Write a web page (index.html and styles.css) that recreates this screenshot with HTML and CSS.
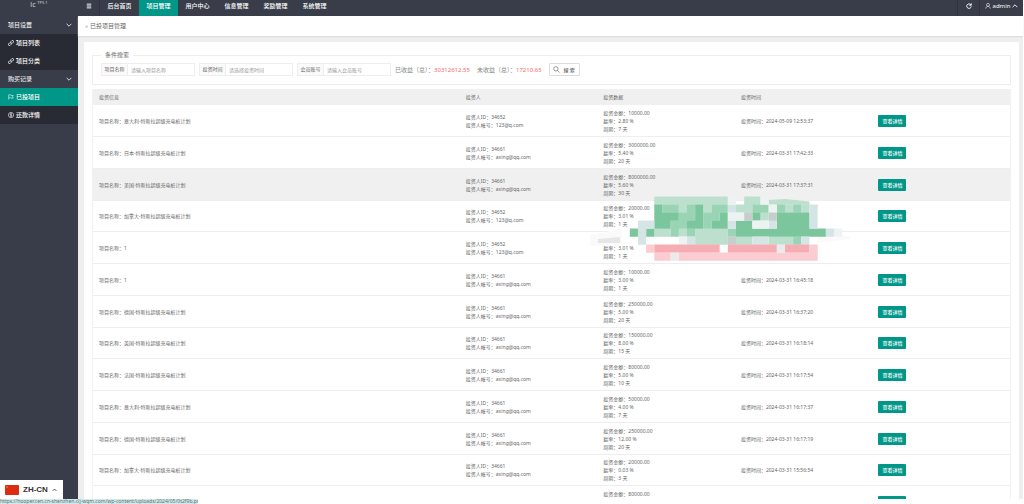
FILE: index.html
```
<!DOCTYPE html>
<html lang="zh-CN">
<head>
<meta charset="utf-8">
<title>已投项目管理</title>
<link rel="stylesheet" href="styles.css">
</head>
<body>
<div class="app">
  <aside class="side">
    <div class="logo">lc <sup>TP5.1</sup></div>
    <nav class="menu">
      <button class="group" type="button">项目设置<svg class="caret" viewBox="0 0 10 6"><path d="M1 1l4 4 4-4"/></svg></button>
      <a class="item" href="#"><svg class="ico" viewBox="0 0 16 16"><path d="M7 9a3 3 0 0 0 4 0l3-3a2.800 2.800 0 0 0-4-4L8 4M9 7a3 3 0 0 0-4 0l-3 3a2.800 2.800 0 0 0 4 4l2-2"/></svg>项目列表</a>
      <a class="item" href="#"><svg class="ico" viewBox="0 0 16 16"><path d="M7 9a3 3 0 0 0 4 0l3-3a2.800 2.800 0 0 0-4-4L8 4M9 7a3 3 0 0 0-4 0l-3 3a2.800 2.800 0 0 0 4 4l2-2"/></svg>项目分类</a>
      <button class="group" type="button">购买记录<svg class="caret" viewBox="0 0 10 6"><path d="M1 1l4 4 4-4"/></svg></button>
      <a class="item active" href="#"><svg class="ico thin" viewBox="0 0 16 16"><path d="M2 15V2h5l1 2h6l-2 3.500 2 3.500H8l-1-1H2"/></svg>已投项目</a>
      <a class="item" href="#"><svg class="ico thin" viewBox="0 0 16 16"><circle cx="8" cy="8" r="7"/><path d="M10.500 5.500C9 4 5.500 4.500 5.500 6.300S10.500 8 10.500 10 7 12 5.300 10.500M8 3v10"/></svg>还款详情</a>
    </nav>
  </aside>
  <div class="body">
    <header class="top">
      <button class="tool burger" type="button" aria-label="菜单"><svg class="ico" viewBox="0 0 16 16"><path d="M2 3h12M2 8h12M2 13h12"/></svg></button>
      <nav class="tabs">
        <a href="#">后台首页</a>
        <a href="#" class="active">项目管理</a>
        <a href="#">用户中心</a>
        <a href="#">信息管理</a>
        <a href="#">奖励管理</a>
        <a href="#">系统管理</a>
      </nav>
      <button class="tool refresh" type="button" aria-label="刷新"><svg class="ico" viewBox="0 0 16 16"><path d="M13 5a6 6 0 1 0 1 4M14 1v5H9"/></svg></button>
      <button class="tool user" type="button"><svg class="ico thin" viewBox="0 0 16 16"><circle cx="8" cy="5" r="4"/><path d="M2 15c0-4 3-6 6-6s5 2 6 6"/></svg>admin<svg class="caret" viewBox="0 0 10 6"><path d="M1 5l4-4 4 4"/></svg></button>
    </header>
    <div class="crumb"><span class="mark">»</span>已投项目管理</div>
    <main class="page">
      <section class="panel">
        <form>
          <fieldset class="search">
            <legend>条件搜索</legend>
            <div class="fields">
              <div class="field"><label for="name">项目名称</label><input id="name" type="text" placeholder="请输入项目名称"></div>
              <div class="field"><label for="time">投资时间</label><input id="time" type="text" placeholder="请选择投资时间"></div>
              <div class="field"><label for="member">会员账号</label><input id="member" type="text" placeholder="请输入会员账号"></div>
              <p class="sum">已收益（总）：<b>30312612.55</b></p>
              <p class="sum">未收益（总）：<b>17210.65</b></p>
              <button class="find" type="submit"><svg class="ico thin" viewBox="0 0 16 16"><circle cx="6.500" cy="6.500" r="5"/><path d="M10 10l5 5"/></svg>搜 索</button>
            </div>
          </fieldset>
        </form>
        <div class="grid">
          <table>
            <thead><tr><th class="wide">投资信息</th><th>投资人</th><th>投资数据</th><th>投资时间</th><th></th></tr></thead>
            <tbody>
              <tr><td>项目名称：意大利-特斯拉超级充电桩计划</td><td>投资人ID：34652<br>投资人帐号：123@q.com</td><td>投资金额：10000.00<br>赢率：2.80 %<br>周期：7 天</td><td>投资时间：2024-05-09 12:53:37</td><td><button class="detail" type="button">查看详情</button></td></tr>
              <tr><td>项目名称：日本-特斯拉超级充电桩计划</td><td>投资人ID：34661<br>投资人帐号：axing@qq.com</td><td>投资金额：3000000.00<br>赢率：5.40 %<br>周期：20 天</td><td>投资时间：2024-03-31 17:42:33</td><td><button class="detail" type="button">查看详情</button></td></tr>
              <tr class="hover"><td>项目名称：美国-特斯拉超级充电桩计划</td><td>投资人ID：34661<br>投资人帐号：axing@qq.com</td><td>投资金额：8000000.00<br>赢率：5.60 %<br>周期：30 天</td><td>投资时间：2024-03-31 17:37:31</td><td><button class="detail" type="button">查看详情</button></td></tr>
              <tr><td>项目名称：加拿大-特斯拉超级充电桩计划</td><td>投资人ID：34652<br>投资人帐号：123@q.com</td><td>投资金额：20000.00<br>赢率：3.01 %<br>周期：1 天</td><td></td><td><button class="detail" type="button">查看详情</button></td></tr>
              <tr><td>项目名称：1</td><td>投资人ID：34652<br>投资人帐号：123@q.com</td><td><br>赢率：3.01 %<br>周期：1 天</td><td></td><td><button class="detail" type="button">查看详情</button></td></tr>
              <tr><td>项目名称：1</td><td>投资人ID：34661<br>投资人帐号：axing@qq.com</td><td>投资金额：10000.00<br>赢率：3.00 %<br>周期：1 天</td><td>投资时间：2024-03-31 16:45:18</td><td><button class="detail" type="button">查看详情</button></td></tr>
              <tr><td>项目名称：德国-特斯拉超级充电桩计划</td><td>投资人ID：34661<br>投资人帐号：axing@qq.com</td><td>投资金额：250000.00<br>赢率：5.00 %<br>周期：20 天</td><td>投资时间：2024-03-31 16:37:20</td><td><button class="detail" type="button">查看详情</button></td></tr>
              <tr><td>项目名称：英国-特斯拉超级充电桩计划</td><td>投资人ID：34661<br>投资人帐号：axing@qq.com</td><td>投资金额：150000.00<br>赢率：8.00 %<br>周期：15 天</td><td>投资时间：2024-03-31 16:18:14</td><td><button class="detail" type="button">查看详情</button></td></tr>
              <tr><td>项目名称：法国-特斯拉超级充电桩计划</td><td>投资人ID：34661<br>投资人帐号：axing@qq.com</td><td>投资金额：80000.00<br>赢率：5.00 %<br>周期：10 天</td><td>投资时间：2024-03-31 16:17:54</td><td><button class="detail" type="button">查看详情</button></td></tr>
              <tr><td>项目名称：意大利-特斯拉超级充电桩计划</td><td>投资人ID：34661<br>投资人帐号：axing@qq.com</td><td>投资金额：50000.00<br>赢率：4.00 %<br>周期：7 天</td><td>投资时间：2024-03-31 16:17:37</td><td><button class="detail" type="button">查看详情</button></td></tr>
              <tr><td>项目名称：德国-特斯拉超级充电桩计划</td><td>投资人ID：34661<br>投资人帐号：axing@qq.com</td><td>投资金额：250000.00<br>赢率：12.00 %<br>周期：20 天</td><td>投资时间：2024-03-31 16:17:19</td><td><button class="detail" type="button">查看详情</button></td></tr>
              <tr><td>项目名称：加拿大-特斯拉超级充电桩计划</td><td>投资人ID：34661<br>投资人帐号：axing@qq.com</td><td>投资金额：20000.00<br>赢率：0.03 %<br>周期：3 天</td><td>投资时间：2024-03-31 15:56:54</td><td><button class="detail" type="button">查看详情</button></td></tr>
              <tr><td></td><td></td><td>投资金额：80000.00<br><br><br></td><td></td><td><button class="detail" type="button" aria-label="查看详情"></button></td></tr>
            </tbody>
          </table>
          <svg class="mosaic" viewBox="0 0 260 68" aria-hidden="true">
            <path fill="#fafafa" d="M0 42L30 36h30v14l-60 3zM225 40l35 3v3l-35 4z"/>
            <path fill="#e6e6e6" d="M8 46l22-2v6H8z"/>
            <path fill="#fff" d="M32 36h24v16H32zM64 9h163v57H64z"/>
            <g transform="translate(64.300 3.700) scale(8.170 8)" fill="none" stroke-width="1.020">
              <path stroke="#bce0cd" d="M0 .5h9M11 .5h2M3 1.500h1M6 1.500h1M10 1.500h2M16 1.500h1M18 1.500h1M13 2.500h1M0 4.500h2M3 4.500h1M5 4.500h4M5 5.500h4M10 5.500h2M14 5.500h3"/>
              <path fill="#bce0cd" stroke="none" d="M14 .4l2-.1 3 .3V1h-5z"/>
              <path stroke="#99d4b4" d="M1 1.500h2M4 1.500h1M7 1.500h2M12 1.500h2M15 1.500h1M17 1.500h1M3 2.500h2M6 2.500h2M2 3.500h2M6 3.500h1M2 4.500h1M4 4.500h1M9 4.500h1M17 5.500h1"/>
              <path stroke="#7bc69c" d="M0 1.500h1M5 1.500h1M0 2.500h3M5 2.500h1M8 2.500h1M12 2.500h1M15 2.500h4M0 3.500h2M4 3.500h2M7 3.500h2M10 3.500h2M15 3.500h4M-3 4.500h1M-1 4.500h1M10 4.500h11"/>
              <path stroke="#d5e5e6" d="M9 1.500h1M19 1.500h1M19 2.500h1M-2 3.500h2M9 3.500h1M14 3.500h1M19 3.500h1M-2 4.500h1M21 4.500h1M4 5.500h1M12 5.500h2M18 5.500h1M-2 5.500h1"/>
              <path stroke="#edf2f3" d="M9 .5h1M13 .5h1M14 1.500h1M9 2.500h2M12 3.500h2M22 4.500h1M3 5.500h1"/>
              <path stroke="#c6cecb" d="M11 2.500h1M14 2.500h1M9 5.500h1"/>
              <path stroke="#f5acb2" d="M0 6.500h8M9 6.500h6M16 6.500h3"/>
              <path stroke="#fbccd1" d="M-1 6.500h1M19 6.500h1M0 7.500h2M3 7.500h17"/>
              <path stroke="#ebe9ea" d="M2 7.500h1M15 6.500h1"/>
            </g>
          </svg>
        </div>
      </section>
    </main>
  </div>
  <button class="lang" type="button"><svg class="flag" viewBox="0 0 14 10"><path fill="#de2c12" d="M0 0h14v10H0z"/><path fill="#f5a623" d="M2 1l.3.700h.7l-.5.500.2.800-.7-.4-.7.4.2-.8-.5-.5h.7z"/></svg>ZH-CN<svg class="caret" viewBox="0 0 10 6"><path d="M1 5l4-4 4 4"/></svg></button>
</div>
<footer class="status"><span>https://hooper.cen.cn-shenzhen.clj-wqm.com/wp-content/uploads/2024/05/0t2f9b.png</span></footer>
</body>
</html>
```
FILE: styles.css
```
* { box-sizing: border-box; }
body {
  margin: 0;
  height: 100vh;
  display: flex;
  flex-direction: column;
  overflow: hidden;
  background: #fff;
  color: #666;
  font: 5px/8px "Noto Sans", "Noto Sans CJK SC", sans-serif;
}
button, input { font: inherit; color: inherit; margin: 0; }
button { border: 0; padding: 0; background: none; cursor: pointer; }
a { color: inherit; text-decoration: none; }
svg { display: block; }
.ico, .caret { fill: none; stroke: currentColor; }
.ico { width: 6px; height: 6px; stroke-width: 2.500; flex: none; }
.ico.thin { stroke-width: 1.500; }
.caret { width: 6px; height: 4px; stroke-width: 1.500; flex: none; }

.app {
  position: relative;
  flex: 1;
  min-height: 0;
  display: flex;
  overflow: hidden;
  padding-right: 1px;
}

.side { width: 78px; flex: none; background: #393d49; color: #fff; font-size: 6px; }
.logo { height: 16px; text-align: center; color: #d5d6d9; font-size: 7px; line-height: 10px; }
.logo sup { font-size: 4px; line-height: 4px; }
.menu { display: flex; flex-direction: column; }
.group, .item { display: flex; align-items: center; height: 18px; padding: 0 6px 0 8px; }
.group { justify-content: space-between; color: #e8e8ea; font-weight: 500; }
.item { gap: 2px; background: #282b33; font-weight: 500; }
.item.active { background: #009688; }

.body { flex: 1; min-width: 0; display: flex; flex-direction: column; background: #eee; }
.top { display: flex; height: 16px; flex: none; background: #393d49; color: #fff; font-size: 6px; line-height: 12px; }
.tabs { display: flex; flex: 1; }
.tabs a { width: 39px; text-align: center; font-weight: 500; }
.tabs .active { background: #009688; }
.tool { display: flex; align-items: center; justify-content: center; gap: 2px; padding-bottom: 4px; border-right: 1px solid #31343f; }
.burger { width: 22px; }
.refresh { width: 23px; border-left: 1px solid #31343f; }
.user { width: 43px; border-right: 0; }

.crumb { display: flex; align-items: center; gap: 2px; flex: none; height: 20px; padding: 0 7px; background: #fff; box-shadow: 0 1px 1px #ddd; font-size: 6px; }
.mark { color: #999; }

.page { flex: 1; min-height: 0; padding: 6px 4px 0 6px; }
.panel { height: 100%; padding: 9px 8px 0; overflow: hidden; background: #fff; }
.search { margin: 0; padding: 0 8px 8px; border: 1px solid #eee; }
.search legend { padding: 0 4px; font-size: 6px; }
.fields { display: flex; align-items: center; gap: 4px; padding-top: 4px; }
.field { display: flex; width: 94px; height: 13px; border: 1px solid #eee; }
.field label { width: 26px; text-align: center; line-height: 11px; background: #fafafa; border-right: 1px solid #eee; }
.field input { flex: 1; min-width: 0; padding: 0 3px; border: 0; outline: 0; background: #fff; }
.field input::placeholder { color: #999; }
.sum { margin: 0; padding-right: 3px; font-size: 6px; color: #888; white-space: nowrap; }
.sum b { font-weight: 400; color: #f56c6c; }
.find { display: flex; align-items: center; justify-content: center; gap: 3px; width: 31px; height: 13px; border: 1px solid #ddd; border-radius: 1px; font-weight: 500; }
.find .ico { width: 7px; height: 7px; }

.grid { position: relative; margin-top: 4px; }
table { width: 100%; table-layout: fixed; border-collapse: separate; border-spacing: 0; border: 1px solid #f2f2f2; border-width: 0 1px; }
th { height: 16px; padding: 0 6px; text-align: left; font-weight: 400; background: #f0f0f0; }
.wide { width: 40%; }
td { height: 32px; padding: 3px 6px; border-bottom: 1px solid #eee; white-space: nowrap; }
tbody tr:nth-child(4n) td { height: 31px; }
.hover td { background: #f0f0f0; }
.detail { display: block; width: 28px; height: 12px; border-radius: 1px; background: #009688; color: #fff; font-weight: 500; }
.mosaic { position: absolute; left: 498px; top: 104px; width: 260px; height: 68px; }

.lang { position: absolute; left: 0; bottom: 0; display: flex; align-items: center; gap: 4px; height: 19px; padding: 0 6px 0 5px; background: #fff; color: #333; font: 700 8px/10px "Liberation Sans", sans-serif; }
.flag { width: 14px; height: 10px; border-radius: 1px; }
.lang .caret { width: 5px; }

.status { flex: none; height: 5px; }
.status span { display: block; width: 198px; height: 5px; overflow: hidden; white-space: nowrap; background: #d3e8ea; line-height: 5px; color: #577; }
```
